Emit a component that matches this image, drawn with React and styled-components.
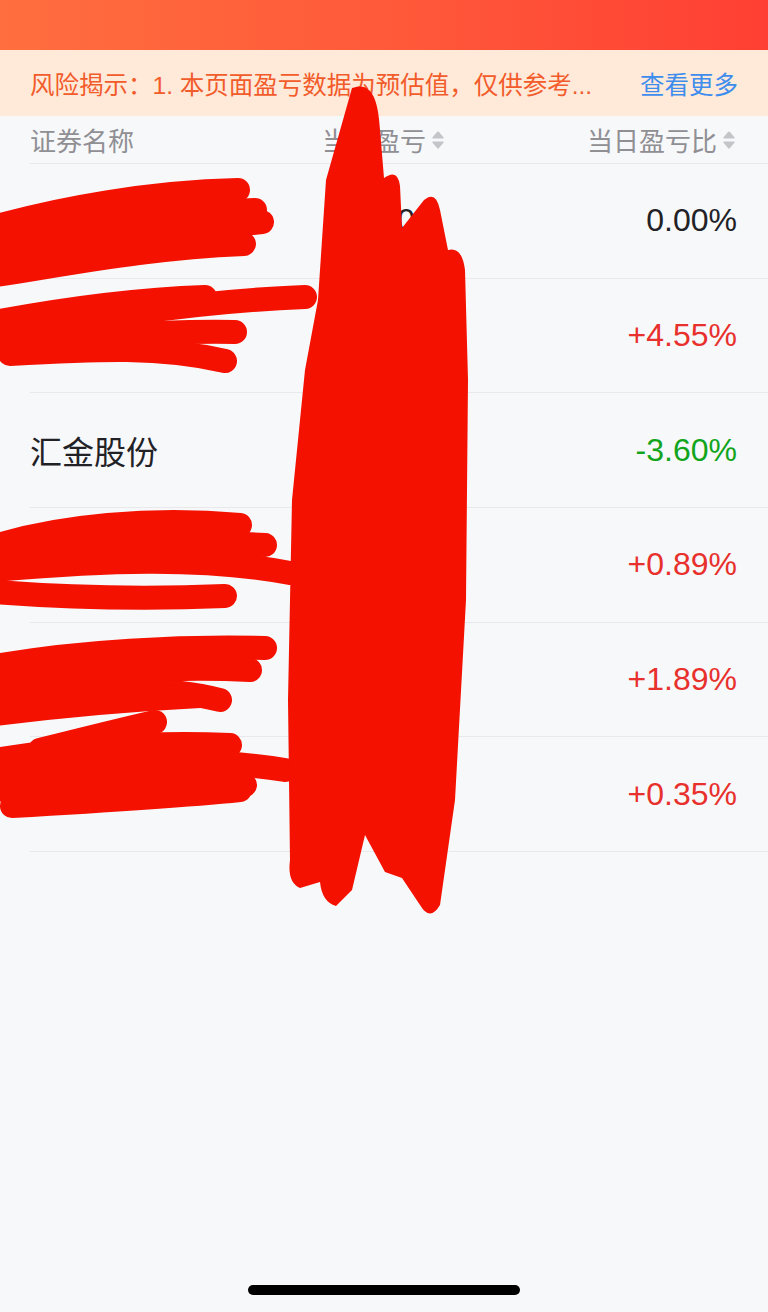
import React from 'react';
import styled, { createGlobalStyle } from 'styled-components';

const GlobalStyle = createGlobalStyle`
  html, body {
    margin: 0;
    padding: 0;
    background: #f7f8fa;
  }
  body {
    font-family: "Liberation Sans", "Noto Sans CJK SC", sans-serif;
  }
`;

const Page = styled.div`
  position: relative;
  width: 768px;
  min-height: 1312px;
  display: flex;
  flex-direction: column;
  background: #f7f8fa;
  overflow: hidden;
`;

const TopBar = styled.div`
  height: 50px;
  background: linear-gradient(90deg, #ff6e3e 0%, #ff5a3a 50%, #ff3f33 100%);
`;

const Notice = styled.div`
  height: 66px;
  display: flex;
  align-items: center;
  justify-content: space-between;
  padding: 0 30px;
  background: #ffe9d9;
  font-size: 24.5px;
`;

const NoticeText = styled.span`
  color: #f25b2a;
  white-space: nowrap;
`;

const MoreLink = styled.span`
  color: #3e8ded;
  font-size: 24.5px;
`;

const Table = styled.div`
  flex: 1;
  display: flex;
  flex-direction: column;
  padding-left: 30px;
`;

const HeadRow = styled.div`
  height: 48px;
  display: grid;
  grid-template-columns: 265px 150px 1fr;
  align-items: center;
  padding-right: 32px;
  border-bottom: 1px solid #e9e9ec;
  box-sizing: border-box;
  color: #8f8f94;
  font-size: 26px;
`;

const HeadCell = styled.div`
  display: flex;
  align-items: center;
  justify-content: ${(p) => (p.$right ? 'flex-end' : 'flex-start')};
  white-space: nowrap;
`;

const SortIcon = styled.svg`
  width: 14px;
  height: 24px;
  margin-left: 5px;
`;

const Row = styled.div`
  height: 114.7px;
  display: grid;
  grid-template-columns: 265px 150px 1fr;
  align-items: center;
  padding-right: 31px;
  border-bottom: 1px solid #e9e9ec;
  box-sizing: border-box;
  font-size: 32px;
`;

const Name = styled.div`
  color: #222226;
  white-space: nowrap;
`;

const Value = styled.div`
  text-align: right;
  color: ${(p) => p.$color};
  padding-right: ${(p) => (p.$mid ? '30px' : '0')};
  white-space: nowrap;
`;

const HomeBar = styled.div`
  width: 272px;
  height: 10px;
  border-radius: 5px;
  background: #000;
  margin: 0 auto 17px;
`;

const Scribble = styled.svg`
  position: absolute;
  left: 0;
  top: 0;
  width: 768px;
  height: 1312px;
  pointer-events: none;
`;

const RED = '#e8302c';
const GREEN = '#12a51c';
const DARK = '#222226';

const rows = [
  { name: '', mid: '0.00', pct: '0.00%', color: DARK },
  { name: '', mid: '+0.00', pct: '+4.55%', color: RED },
  { name: '汇金股份', mid: '-0.00', pct: '-3.60%', color: GREEN },
  { name: '', mid: '+0.00', pct: '+0.89%', color: RED },
  { name: '', mid: '+0.00', pct: '+1.89%', color: RED },
  { name: '', mid: '+0.00', pct: '+0.35%', color: RED },
];

const Sort = () => (
  <SortIcon viewBox="0 0 14 24">
    <path d="M7 3.5 Q7.6 3.5 8 4 L12.6 9.6 Q13 10.5 12 10.5 L2 10.5 Q1 10.5 1.4 9.6 L6 4 Q6.4 3.5 7 3.5 Z" fill="#c4c4c9" />
    <path d="M7 20.5 Q7.6 20.5 8 20 L12.6 14.4 Q13 13.5 12 13.5 L2 13.5 Q1 13.5 1.4 14.4 L6 20 Q6.4 20.5 7 20.5 Z" fill="#c4c4c9" />
  </SortIcon>
);

const strokes = [
  'M -10 228 C 60 208, 150 192, 238 190',
  'M -10 246 C 80 228, 180 212, 255 210',
  'M -10 262 C 100 244, 200 228, 262 222',
  'M -10 276 C 80 262, 150 248, 244 244',
  'M -5 322 C 80 306, 150 299, 205 297',
  'M 0 336 C 100 316, 200 301, 305 297',
  'M 0 346 C 80 336, 160 331, 235 332',
  'M 10 354 C 100 349, 160 346, 225 361',
  'M -5 546 C 60 526, 150 517, 240 525',
  'M -5 556 C 100 546, 200 541, 265 545',
  'M -5 570 C 100 561, 200 556, 290 573',
  'M -5 592 C 100 600, 180 598, 225 596',
  'M -5 666 C 80 651, 180 646, 265 648',
  'M -5 681 C 100 671, 180 666, 250 670',
  'M -5 700 C 80 690, 160 684, 220 700',
  'M -5 714 C 60 706, 120 700, 200 696',
  'M 40 750 C 80 740, 120 730, 155 722',
  'M -5 760 C 80 746, 160 742, 230 745',
  'M -5 775 C 100 761, 200 756, 285 770',
  'M -5 790 C 100 781, 200 778, 245 785',
  'M 12 806 C 100 801, 180 796, 240 790',
];

const blob =
  'M 352 88 C 368 82, 378 92, 380 130 L 384 178 Q 398 168, 400 186 L 402 228 L 424 200 Q 436 190, 440 210 L 448 250 Q 462 246, 465 270 L 468 380 L 466 600 L 455 800 L 440 905 Q 430 922, 420 905 L 402 878 L 385 872 L 365 835 L 352 890 L 336 906 Q 322 902, 320 882 L 300 888 Q 287 882, 290 860 L 288 700 L 292 500 L 305 370 L 318 300 L 326 180 Z';

export default function App() {
  return (
    <Page>
      <GlobalStyle />
      <TopBar />
      <Notice>
        <NoticeText>风险揭示：1. 本页面盈亏数据为预估值，仅供参考...</NoticeText>
        <MoreLink>查看更多</MoreLink>
      </Notice>
      <Table>
        <HeadRow>
          <HeadCell>证券名称</HeadCell>
          <HeadCell $right>
            当日盈亏
            <Sort />
          </HeadCell>
          <HeadCell $right>
            当日盈亏比
            <Sort />
          </HeadCell>
        </HeadRow>
        {rows.map((r, i) => (
          <Row key={i}>
            <Name>{r.name}</Name>
            <Value $mid $color={DARK}>
              {r.mid}
            </Value>
            <Value $color={r.color}>{r.pct}</Value>
          </Row>
        ))}
      </Table>
      <HomeBar />
      <Scribble viewBox="0 0 768 1312">
        <g fill="none" stroke="#f41100" strokeWidth="24" strokeLinecap="round">
          {strokes.map((d, i) => (
            <path key={i} d={d} />
          ))}
        </g>
        <path d={blob} fill="#f41100" />
      </Scribble>
    </Page>
  );
}
